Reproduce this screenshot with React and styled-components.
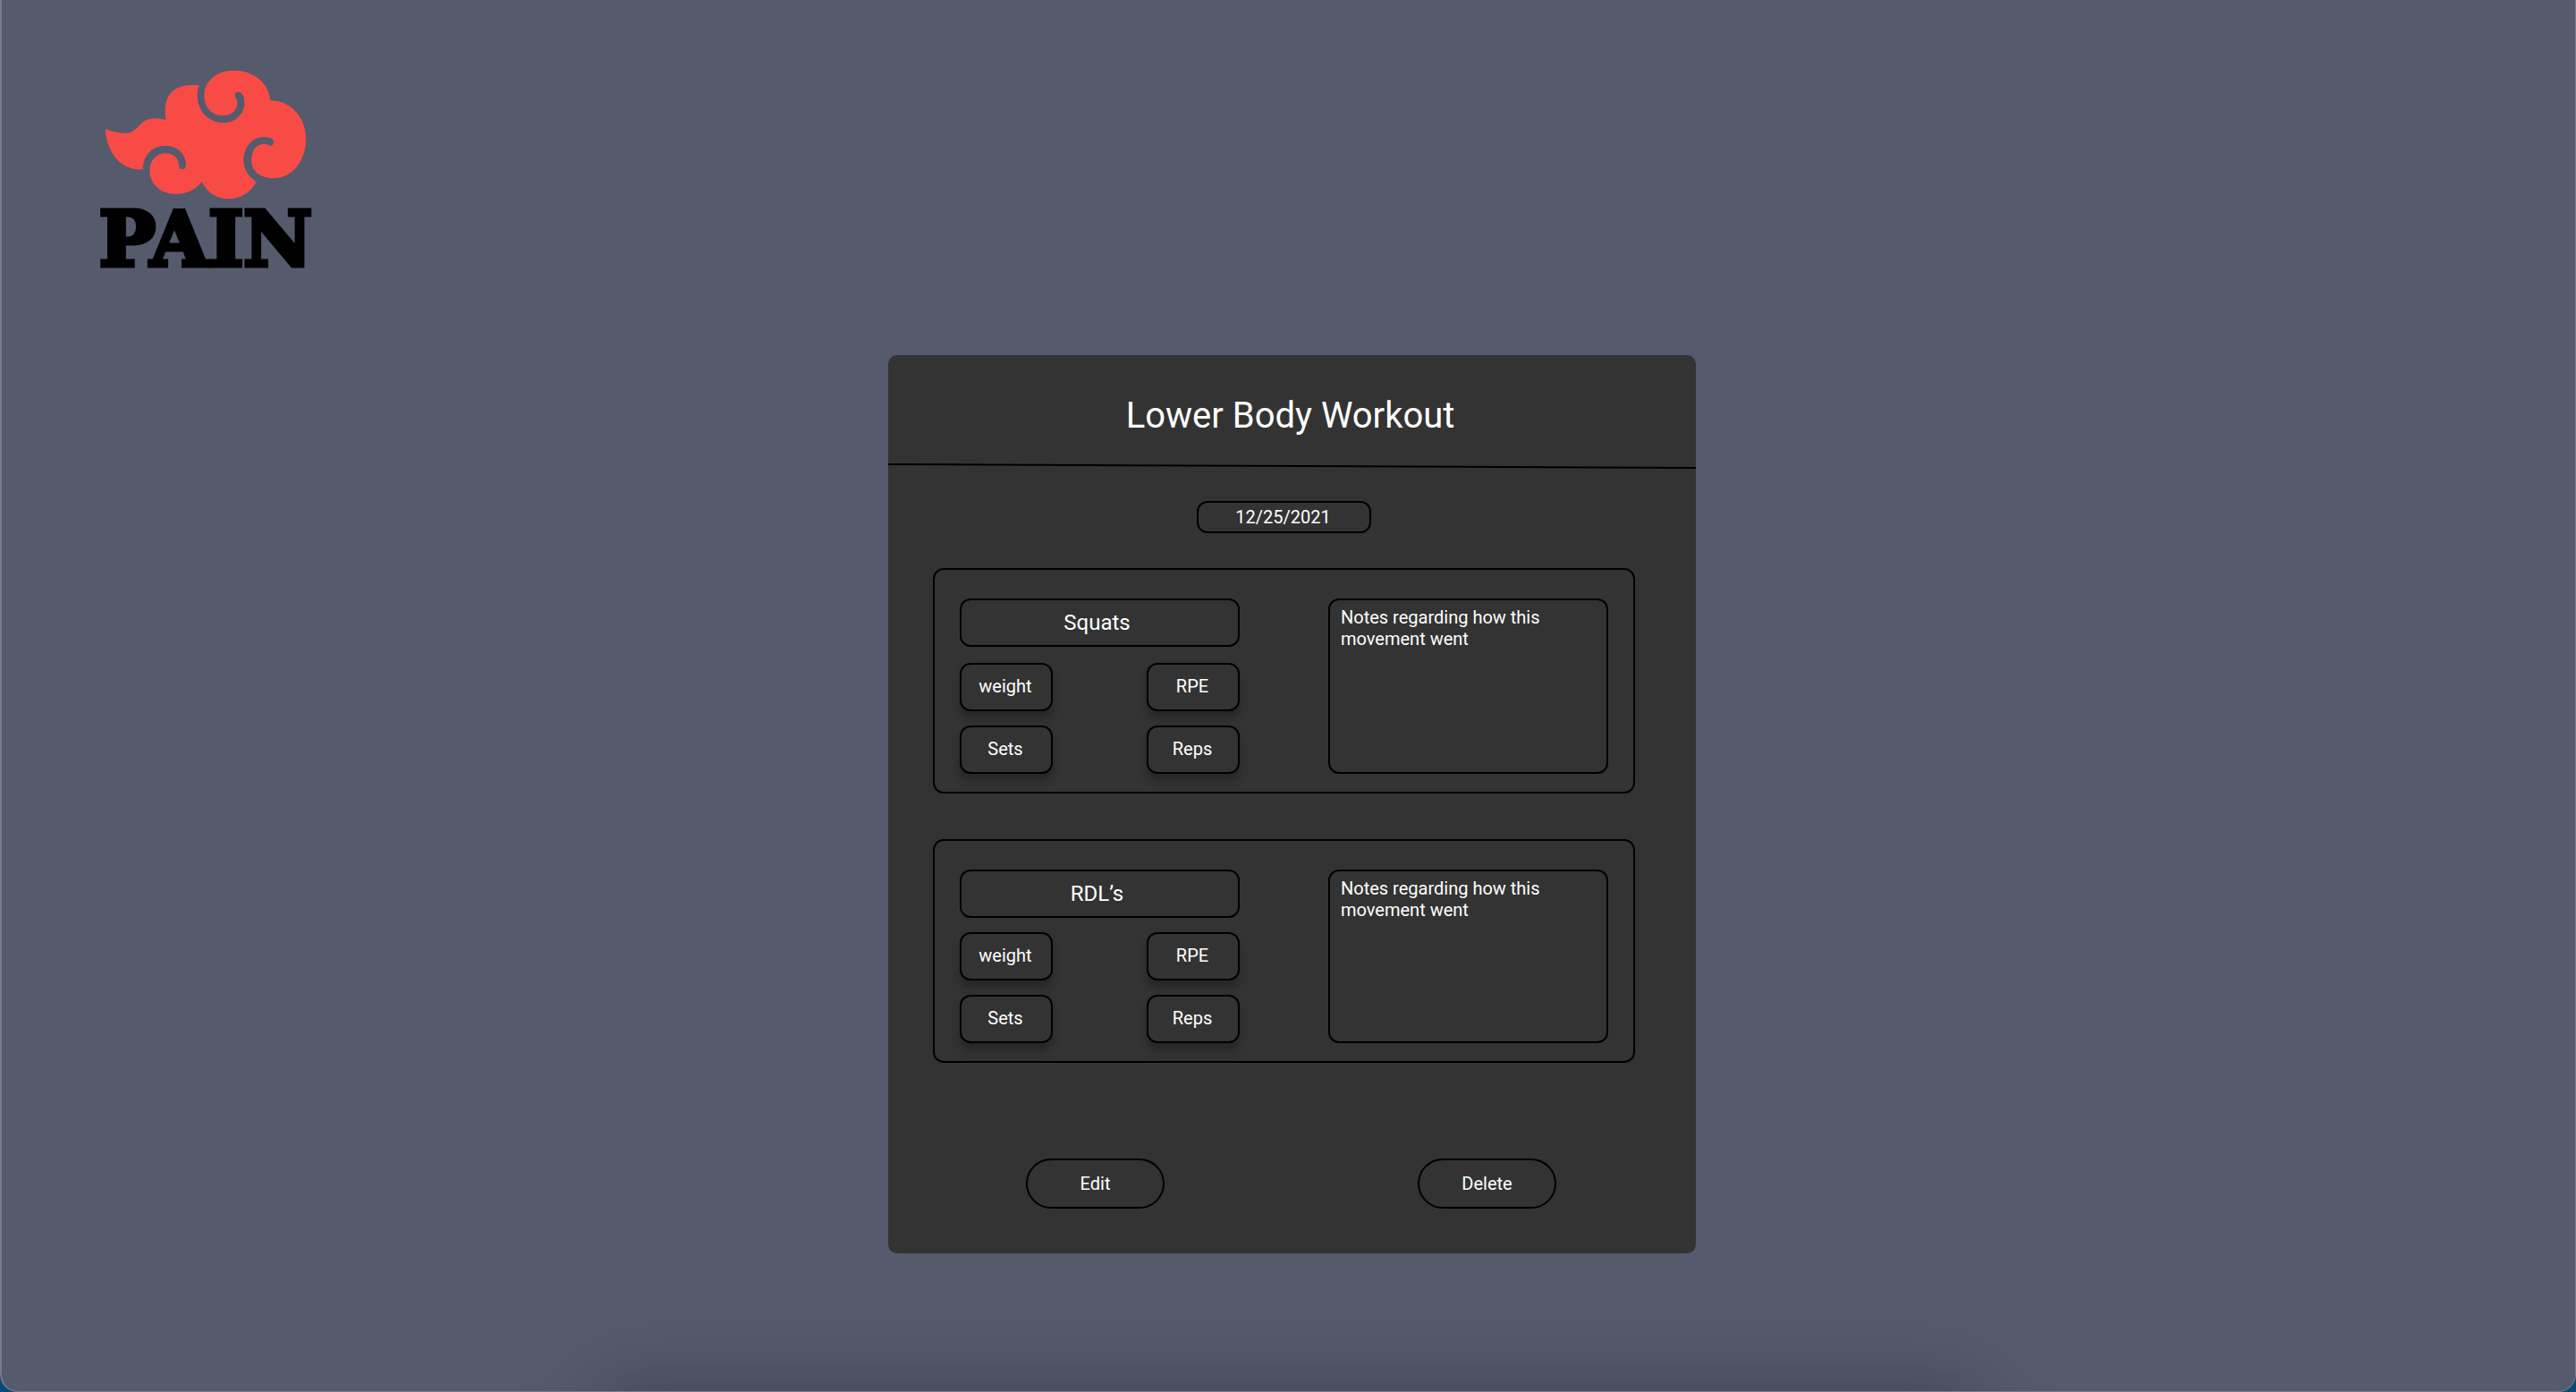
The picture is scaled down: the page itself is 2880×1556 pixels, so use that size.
import React from "react";
import styled, { createGlobalStyle } from "styled-components";

const GlobalStyle = createGlobalStyle`
  *, *::before, *::after { box-sizing: border-box; }
  body {
    margin: 0;
    background: linear-gradient(#101216 99%, #0b4a78 99%);
    font-family: Roboto, "Liberation Sans", sans-serif;
    color: #fff;
  }
`;

const Window = styled.div`
  position: relative;
  display: flex;
  flex-direction: column;
  min-height: 100vh;
  overflow: hidden;
  background: #555a6d;
  border: solid #777b8a;
  border-width: 0 1px 1px 2px;
  border-radius: 0 0 20px 20px;
`;

const DockShadow = styled.div`
  position: absolute;
  top: 100%;
  left: 50%;
  width: 54%;
  height: 120px;
  transform: translateX(-50%);
  border-radius: 40px;
  box-shadow: 0 0 90px rgba(0, 10, 10, 0.28);
  pointer-events: none;
`;

const Header = styled.header`
  display: flex;
  padding: 60px 88px 0;
`;

const Logo = styled.a`
  display: flex;
  flex-direction: column;
  align-items: center;
  width: 280px;
  color: #000;
  text-decoration: none;
`;

const Cloud = styled.svg`
  display: block;
  width: 280px;
  height: 168px;
`;

const Wordmark = styled.span`
  font-family: "DejaVu Serif", serif;
  font-size: 84px;
  font-weight: 700;
  line-height: 80px;
  -webkit-text-stroke: 5px #000;
`;

const Main = styled.main`
  display: flex;
  justify-content: center;
  padding: 89px 0 80px 8px;
`;

const Card = styled.article`
  width: 100%;
  max-width: 903px;
  background: #333;
  border-radius: 10px;
`;

const CardHeader = styled.div`
  display: flex;
  align-items: center;
  justify-content: center;
  height: 121px;
  padding: 14px 4px 0 0;
`;

const Title = styled.h1`
  margin: 0;
  font-size: 40px;
  font-weight: 400;
  line-height: 48px;
`;

const Divider = styled.svg`
  display: block;
  width: 100%;
  height: 6px;
`;

const Body = styled.div`
  display: flex;
  flex-direction: column;
  align-items: center;
  padding: 36px 68px 0 50px;
`;

const Field = styled.input`
  display: block;
  width: 100%;
  height: 54px;
  padding: 0 2px 0 0;
  background: #333;
  border: 2px solid #000;
  border-radius: 12px;
  color: #fff;
  font-family: inherit;
  font-size: 20px;
  font-kerning: normal;
  text-rendering: optimizeLegibility;
  text-align: center;
  outline: none;

  &::placeholder {
    color: #fff;
    opacity: 1;
  }
`;

const DateField = styled(Field)`
  width: 195px;
  height: 36px;
  margin-bottom: 39px;
`;

const NameField = styled(Field)`
  padding-right: 6px;
  font-size: 24px;
`;

const MetricField = styled(Field)`
  padding-bottom: 2px;
  box-shadow: 0 8px 8px rgba(0, 0, 0, 0.25);
`;

const ExerciseList = styled.div`
  display: grid;
  gap: 51px;
  width: 100%;
`;

const Exercise = styled.section`
  display: grid;
  grid-template-columns: 1fr 1fr;
  gap: 99px;
  padding: 32px 28px 20px;
  border: 2px solid #000;
  border-radius: 12px;
`;

const Details = styled.div`
  display: grid;
  gap: ${(p) => p.$gap}px;
`;

const Metrics = styled.div`
  display: grid;
  grid-template-columns: 1fr 1fr;
  gap: 16px 105px;
`;

const Notes = styled.textarea`
  display: block;
  width: 100%;
  height: 100%;
  padding: 7px 12px;
  background: transparent;
  border: 2px solid #000;
  border-radius: 12px;
  color: #fff;
  font-family: inherit;
  font-size: 20px;
  line-height: 24px;
  resize: none;
  outline: none;
`;

const Actions = styled.div`
  display: flex;
  justify-content: space-between;
  padding: 107px 156px 50px 154px;
`;

const PillButton = styled.button`
  width: 155px;
  height: 56px;
  padding: 0;
  background: transparent;
  border: 2px solid #000;
  border-radius: 28px;
  color: #fff;
  font-family: inherit;
  font-size: 20px;
  cursor: pointer;
`;

const metrics = ["weight", "RPE", "Sets", "Reps"];

const exercises = [
  { name: "Squats", notes: "Notes regarding how this movement went", gap: 18 },
  { name: "RDL’s", notes: "Notes regarding how this movement went", gap: 16 },
];

export default function App() {
  return (
    <>
      <GlobalStyle />
      <Window>
        <Header>
          <Logo href="#">
            <Cloud viewBox="0 0 840 504" aria-hidden="true">
              <path
                fill="#f94b46"
                d="M83 253 C110 262 130 267 150 267 C195 267 195 217 250 217 C265 217 275 219 286 222 C282 190 282 160 298 138 C318 110 350 101 398 106 C390 125 390 150 397 172 C408 208 440 232 480 232 C520 232 550 200 550 165 C550 145 543 128 530 128 C520 128 515 137 519 145 C524 153 526 158 526 165 C526 190 505 208 480 208 C440 208 415 180 415 140 C415 90 460 56 516 56 C580 56 635 100 636 157 C705 155 756 215 756 285 C756 360 710 418 645 418 C600 418 573 390 573 358 C573 325 590 303 615 303 C622 303 626 304 632 307 C640 312 648 304 648 296 C648 285 635 280 613 280 C575 280 547 315 547 358 C547 385 562 412 590 430 C570 467 535 487 497 487 C455 487 425 465 407 430 C385 457 355 471 320 471 C270 471 232 437 232 393 C232 358 255 334 285 334 C312 334 330 350 330 376 C330 392 354 392 354 376 C354 335 325 309 285 309 C240 309 210 340 209 388 C140 393 90 340 83 253 Z"
              />
            </Cloud>
            <Wordmark>PAIN</Wordmark>
          </Logo>
        </Header>
        <Main>
          <Card>
            <CardHeader>
              <Title>Lower Body Workout</Title>
            </CardHeader>
            <Divider aria-hidden="true">
              <line x1="0" y1="1" x2="100%" y2="5" stroke="#000" strokeWidth="2" />
            </Divider>
            <Body>
              <DateField aria-label="Date" defaultValue="12/25/2021" />
              <ExerciseList>
                {exercises.map((exercise) => (
                  <Exercise key={exercise.name}>
                    <Details $gap={exercise.gap}>
                      <NameField aria-label="Exercise" defaultValue={exercise.name} />
                      <Metrics>
                        {metrics.map((metric) => (
                          <MetricField key={metric} aria-label={metric} placeholder={metric} />
                        ))}
                      </Metrics>
                    </Details>
                    <Notes aria-label="Notes" defaultValue={exercise.notes} />
                  </Exercise>
                ))}
              </ExerciseList>
            </Body>
            <Actions>
              <PillButton type="button">Edit</PillButton>
              <PillButton type="button">Delete</PillButton>
            </Actions>
          </Card>
        </Main>
        <DockShadow />
      </Window>
    </>
  );
}
